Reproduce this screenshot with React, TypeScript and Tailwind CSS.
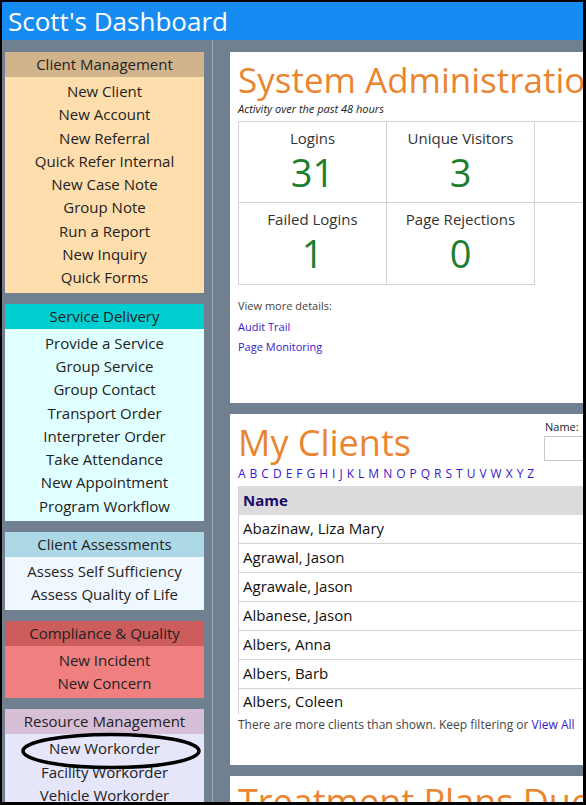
import React from "react";

const F = { fontFamily: '"Open Sans", "Noto Sans", sans-serif' };

type Section = { title: string; head: string; body: string; items: string[] };

const sections: Section[] = [
  {
    title: "Client Management",
    head: "bg-[#d2b48c]",
    body: "bg-[#ffdead]",
    items: [
      "New Client",
      "New Account",
      "New Referral",
      "Quick Refer Internal",
      "New Case Note",
      "Group Note",
      "Run a Report",
      "New Inquiry",
      "Quick Forms",
    ],
  },
  {
    title: "Service Delivery",
    head: "bg-[#00ced1]",
    body: "bg-[#e0ffff]",
    items: [
      "Provide a Service",
      "Group Service",
      "Group Contact",
      "Transport Order",
      "Interpreter Order",
      "Take Attendance",
      "New Appointment",
      "Program Workflow",
    ],
  },
  {
    title: "Client Assessments",
    head: "bg-[#add8e6]",
    body: "bg-[#f0f8ff]",
    items: ["Assess Self Sufficiency", "Assess Quality of Life"],
  },
  {
    title: "Compliance & Quality",
    head: "bg-[#cd5c5c]",
    body: "bg-[#f08080]",
    items: ["New Incident", "New Concern"],
  },
  {
    title: "Resource Management",
    head: "bg-[#d8bfd8]",
    body: "bg-[#e6e6fa]",
    items: ["New Workorder", "Facility Workorder", "Vehicle Workorder", "Vendor Workorder"],
  },
];

const clients = [
  "Abazinaw, Liza Mary",
  "Agrawal, Jason",
  "Agrawale, Jason",
  "Albanese, Jason",
  "Albers, Anna",
  "Albers, Barb",
  "Albers, Coleen",
];

const letters = "ABCDEFGHIJKLMNOPQRSTUVWXYZ".split("");

function Stat({ label, value }: { label: string; value: string }) {
  return (
    <div className="w-[148px] shrink-0 h-full flex flex-col items-center border-r border-[#d3d3d3]">
      <div className="mt-[6px] text-[15px] leading-[20px] text-[#333]">{label}</div>
      <div className="mt-[1px] text-[38px] leading-[46px] text-[#1e7e30]">{value}</div>
    </div>
  );
}

export default function App() {
  return (
    <div
      style={F}
      className="w-[586px] h-[805px] overflow-hidden border-t-2 border-l-2 border-r-[3px] border-b-[3px] border-black flex flex-col bg-[#708090]"
    >
      <div className="h-[38px] shrink-0 bg-[#168cf2] text-white text-[26px] leading-[38px] pl-[6px]">
        Scott's Dashboard
      </div>
      <div className="flex flex-1 min-h-0">
        <div className="w-[211px] shrink-0 border-r border-[#a3acb5] pl-[3px] pt-[12px] flex flex-col gap-[11px]">
          {sections.map((s) => (
            <div key={s.title} className="w-[199px] shrink-0">
              <div className={`${s.head} h-[25px] text-center text-[15px] leading-[25px] text-[#222]`}>
                {s.title}
              </div>
              <div className={`${s.body} py-[3px] relative`}>
                {s.items.map((it) => (
                  <div key={it} className="text-center text-[15px] leading-[23.3px] text-[#222]">
                    {it}
                  </div>
                ))}
                {s.title === "Resource Management" && (
                  <svg className="absolute left-[15px] top-[-2px] pointer-events-none" width="182" height="40" viewBox="0 0 182 40">
                    <ellipse cx="91" cy="19" rx="88" ry="16.5" fill="none" stroke="black" strokeWidth="3.5" />
                  </svg>
                )}
              </div>
            </div>
          ))}
        </div>
        <div className="flex-1 min-w-0 overflow-hidden pl-[17px] pt-[12px] flex flex-col gap-[11px]">
          <div className="w-[460px] h-[351px] shrink-0 bg-white pl-[8px] pt-[8px]">
            <div className="text-[35px] leading-[40px] text-[#e9852f] whitespace-nowrap">System Administration</div>
            <div className="italic text-[11px] leading-[14px] text-[#222] mt-[2px]">Activity over the past 48 hours</div>
            <div className="mt-[5px] border-t border-l border-[#d3d3d3] w-[444px]">
              <div className="flex h-[81px] border-b border-[#d3d3d3]">
                <Stat label="Logins" value="31" />
                <Stat label="Unique Visitors" value="3" />
                <div className="w-[148px] shrink-0 h-full" />
              </div>
              <div className="flex h-[82px] w-[296px] border-b border-[#d3d3d3]">
                <Stat label="Failed Logins" value="1" />
                <Stat label="Page Rejections" value="0" />
              </div>
            </div>
            <div className="mt-[11px] text-[11px] leading-[20.5px] text-[#444]">View more details:</div>
            <div className="text-[11px] leading-[20.5px] text-[#3a17c9]">Audit Trail</div>
            <div className="text-[11px] leading-[20.5px] text-[#3a17c9]">Page Monitoring</div>
          </div>
          <div className="w-[460px] h-[351px] shrink-0 bg-white pl-[8px] pt-[8px] relative">
            <div className="absolute left-[314px] top-[6px]">
              <div className="text-[11px] leading-[14px] text-[#222] pl-[1px]">Name:</div>
              <div className="mt-[2px] w-[100px] h-[25px] border border-[#c8c8c8] bg-white" />
            </div>
            <div className="text-[36px] leading-[42px] text-[#e9852f] whitespace-nowrap">My Clients</div>
            <div className="flex gap-[4px] text-[12px] leading-[16px] text-[#3a17c9] mt-[2px]">
              {letters.map((l) => (
                <span key={l}>{l}</span>
              ))}
            </div>
            <div className="mt-[4px] w-[412px] border-l border-[#d3d3d3]">
              <div className="h-[29px] bg-[#dcdcdc] pl-[4px] text-[15px] leading-[29px] font-bold text-[#1b0b6e]">
                Name
              </div>
              {clients.map((c, i) => (
                <div
                  key={c}
                  className={`${i === clients.length - 1 ? "h-[25px] leading-[25px]" : "h-[29px] leading-[26px] border-b border-[#d3d3d3]"} pl-[4px] text-[15px] text-[#111]`}
                >
                  {c}
                </div>
              ))}
            </div>
            <div className="text-[12px] leading-[22px] text-[#444] whitespace-nowrap">
              There are more clients than shown. Keep filtering or <span className="text-[#3a17c9]">View All</span>
            </div>
          </div>
          <div className="w-[460px] h-[351px] shrink-0 bg-white pl-[8px] pt-[4px]">
            <div className="text-[36px] leading-[44px] text-[#e9852f] whitespace-nowrap">Treatment Plans Due</div>
          </div>
        </div>
      </div>
    </div>
  );
}
